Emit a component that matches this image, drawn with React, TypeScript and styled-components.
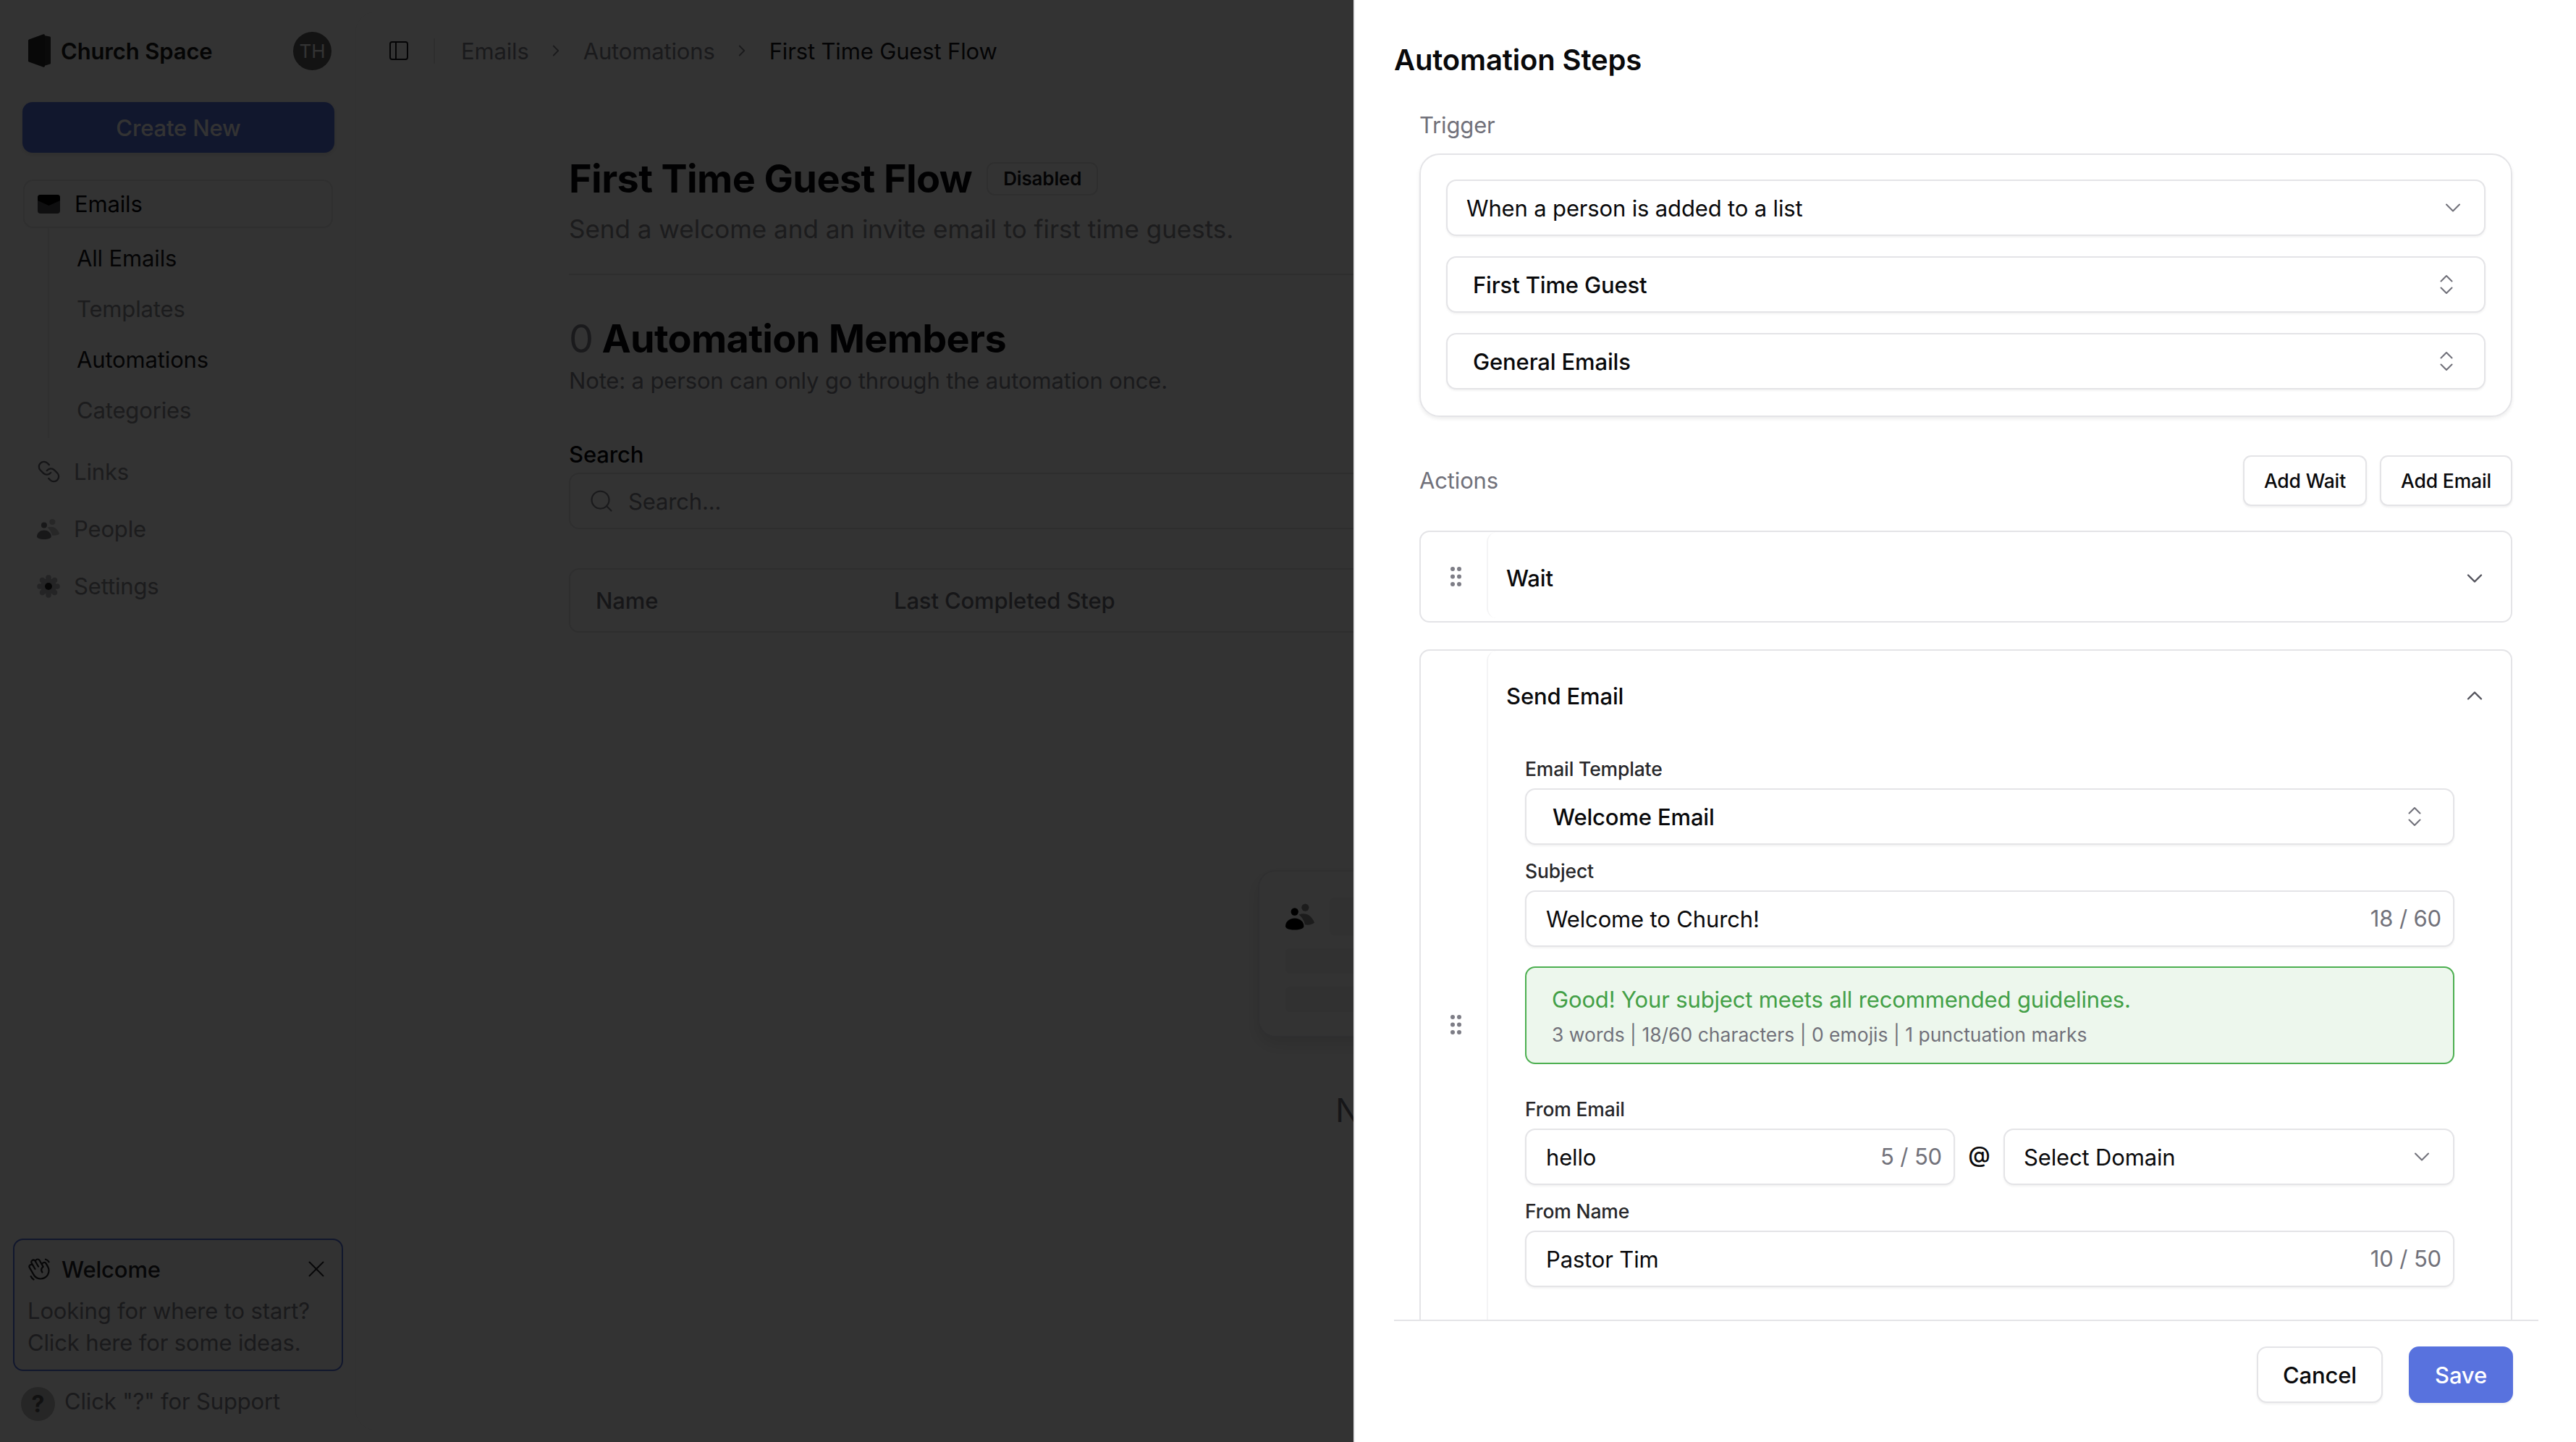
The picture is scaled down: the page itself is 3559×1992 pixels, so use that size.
import React from "react";
import styled, { createGlobalStyle } from "styled-components";
import { ChevronDown, ChevronRight, ChevronUp, ChevronsUpDown, Link as LinkIcon, PanelLeft, Search, X } from "lucide-react";
import { PiHandWaving } from "react-icons/pi";

const Global = createGlobalStyle`
  html, body { margin: 0; padding: 0; background: #fff; }
  * { box-sizing: border-box; }
  body { font-family: Inter, "Liberation Sans", sans-serif; color: #09090b; letter-spacing: -.15px; }
  button { letter-spacing: inherit; }
`;

const Page = styled.div`
  position: relative; display: flex; width: 3559px; height: 1992px; overflow: hidden; background: #fff;
`;
const Sidebar = styled.aside`
  width: 492px; height: 1992px; flex: none; display: flex; flex-direction: column; padding: 0 18px 29px; background: #fefefe;
`;
const BrandRow = styled.div`
  height: 140px; flex: none; display: flex; align-items: center; gap: 13px; padding: 0 16px 0 21px;
`;
const BrandName = styled.span`
  flex: 1; font-size: 31px; font-weight: 600; color: #1a1a1a; white-space: nowrap;
`;
const Avatar = styled.div`
  width: 53px; height: 53px; border-radius: 50%; background: #5e5e5e; color: #fff; display: flex; align-items: center; justify-content: center; font-size: 26px;
`;
const CreateButton = styled.div`
  margin: 1px 12px 0 13px; height: 70px; flex: none; border-radius: 14px; background: #5872de; color: #fff; display: flex; align-items: center; justify-content: center; font-size: 31px; font-weight: 500; box-shadow: 0 2px 6px rgba(0,0,0,.12);
`;
const ActiveItem = styled.div`
  margin: 37px 14px 0 14px; height: 67px; flex: none; display: flex; align-items: center; gap: 20px; padding-left: 18px; border: 2px solid #e8e8ea; border-radius: 14px; background: #fff; font-size: 31px; box-shadow: 0 1px 2px rgba(0,0,0,.04);
`;
const SubNav = styled.div`
  margin-left: 48px; height: 290px; flex: none; padding: 6px 0 0 38px; border-left: 2px solid #efefef;
`;
const SubItem = styled.div<{ $active?: boolean }>`
  height: 70px; display: flex; align-items: center; font-size: 31px; color: ${p => (p.$active ? "#18181b" : "#8a8a92")};
`;
const NavGroup = styled.nav`
  margin-top: 7px; flex: none;
`;
const NavItem = styled.div`
  height: 79px; display: flex; align-items: center; gap: 19px; padding-left: 33px; font-size: 31px; color: #8a8a92;
`;
const IconSlot = styled.span`
  width: 32px; height: 32px; flex: none; display: flex; align-items: center; justify-content: center; color: #6a6a72;
`;
const MirrorIcon = styled.span`
  display: flex; transform: scaleX(-1);
`;
const WelcomeCard = styled.div`
  margin-top: auto; height: 183px; flex: none; padding: 21px 16px 0 18px; border: 2px solid #5872de; border-radius: 14px; background: #fafafa;
`;
const WelcomeHead = styled.div`
  display: flex; align-items: center; gap: 13px; height: 38px; font-size: 31px; font-weight: 500; color: #27272a;
  & > span { flex: 1; }
  & > svg:first-child { margin-left: -2px; }
`;
const WelcomeBody = styled.p`
  margin: 17px 0 0; font-size: 31px; line-height: 43.5px; color: #84848c; white-space: nowrap;
`;
const SupportRow = styled.div`
  margin-top: 21px; display: flex; align-items: center; gap: 13px; padding-left: 11px; height: 48px; font-size: 31px; color: #84848c;
  & > span:last-child { position: relative; top: -4px; }
`;
const HelpDot = styled.span`
  width: 47px; height: 47px; border-radius: 50%; background: #bdbdbd; color: #555; display: flex; align-items: center; justify-content: center; font-size: 32px; font-weight: 700;
`;

const Main = styled.main`
  flex: 1; margin: 17px 18px 17px 0; border-radius: 27px; background: #fff; box-shadow: 0 0 4px rgba(0,0,0,.05); min-width: 0; overflow: hidden;
`;
const TopBar = styled.header`
  height: 106px; display: flex; align-items: center; padding-left: 43px; font-size: 31px; color: #84848c;
`;
const Separator = styled.span`
  width: 2px; height: 35px; margin: 0 36px 0 32px; background: #e4e4e7;
`;
const Crumb = styled.span<{ $current?: boolean }>`
  color: ${p => (p.$current ? "#18181b" : "#84848c")}; white-space: nowrap;
`;
const CrumbGap = styled.span`
  width: 75px; display: flex; justify-content: center; color: #84848c;
`;
const Content = styled.div`
  width: 2200px; padding: 91px 0 0 294px;
`;
const TitleRow = styled.div`
  height: 65px; display: flex; align-items: center; gap: 20px;
`;
const PageTitle = styled.h1`
  margin: 0; font-size: 54px; line-height: 65px; font-weight: 700; white-space: nowrap; letter-spacing: -.6px; color: #09090b;
`;
const Badge = styled.span`
  height: 46px; padding: 0 21px; display: flex; align-items: center; border: 2px solid #e4e4e7; border-radius: 11px; font-size: 26px; font-weight: 600; color: #18181b;
`;
const Subtitle = styled.p`
  margin: 15px 0 0; font-size: 35px; line-height: 44px; color: #8a8a92; white-space: nowrap; letter-spacing: 0;
`;
const Rule = styled.hr`
  margin: 40px 0 0; border: 0; height: 2px; background: #e4e4e7;
`;
const SectionTitle = styled.h2`
  margin: 55px 0 0; font-size: 54px; line-height: 65px; font-weight: 700; letter-spacing: -.7px; white-space: nowrap;
  & > span { font-weight: 400; color: #84848c; }
`;
const Note = styled.p`
  margin: 6px 0 0; font-size: 31px; line-height: 40px; color: #84848c; white-space: nowrap;
`;
const SearchLabel = styled.div`
  margin-top: 62px; font-size: 31px; line-height: 40px; font-weight: 500;
`;
const SearchBox = styled.div`
  margin-top: 5px; height: 78px; display: flex; align-items: center; gap: 19px; padding-left: 25px; border: 2px solid #e4e4e7; border-radius: 14px; font-size: 31px; color: #84848c;
`;
const TableHead = styled.div`
  margin-top: 54px; height: 89px; display: flex; align-items: center; padding-left: 35px; border: 2px solid #e4e4e7; border-radius: 14px; font-size: 31px; font-weight: 500; color: #71717a;
  & > span:first-child { width: 412px; }
`;
const EmptyCard = styled.div`
  position: relative; margin: 328px 0 0 952px; width: 420px; height: 231px; padding: 36px; border: 2px solid #ececef; border-radius: 24px; background: #fff; box-shadow: 0 10px 24px rgba(0,0,0,.12);
`;
const EmptyTop = styled.div`
  display: flex; gap: 20px; align-items: center; height: 52px;
`;
const SkeletonBox = styled.div`
  width: 240px; height: 52px; background: #f4f4f5; border-radius: 6px;
`;
const SkeletonBar = styled.div`
  margin-top: 18px; height: 35px; border-radius: 6px; background: #f4f4f5;
`;
const EmptyText = styled.div`
  margin: 74px 0 0 1059px; font-size: 45px; line-height: 54px; white-space: nowrap; color: #71717a;
`;

const Overlay = styled.div`
  position: absolute; inset: 0; background: rgba(0,0,0,.8);
`;
const Panel = styled.section`
  position: absolute; top: 0; right: 0; bottom: 0; width: 1689px; display: flex; flex-direction: column; background: #fff; border-left: 2px solid #e8e8ea; padding: 58px 52px 0 54px;
`;
const PanelTitle = styled.h2`
  margin: 0; font-size: 40px; line-height: 50px; font-weight: 600; flex: none; color: #09090b;
`;
const Scroll = styled.div`
  flex: 1; min-height: 0; overflow: hidden; padding: 45px 36px 0 35px;
`;
const SectionLabel = styled.div`
  font-size: 31px; line-height: 40px; color: #71717a;
`;
const TriggerCard = styled.div`
  margin-top: 19px; height: 364px; padding: 34px 35px; display: flex; flex-direction: column; gap: 28px; border: 2px solid #e4e4e7; border-radius: 28px; box-shadow: 0 3px 5px rgba(0,0,0,.07);
`;
const Field = styled.div<{ $left?: number; $right?: number; $weight?: number; $flex?: boolean }>`
  height: 78px; flex: ${p => (p.$flex ? "1" : "none")}; min-width: 0; display: flex; align-items: center; justify-content: space-between; padding: 0 ${p => p.$right ?? 25}px 0 ${p => p.$left ?? 26}px; border: 2px solid #e4e4e7; border-radius: 14px; background: #fff; font-size: 31px; font-weight: ${p => p.$weight ?? 400}; color: #09090b; box-shadow: 0 2px 3px rgba(0,0,0,.05); white-space: nowrap;
  & > svg { color: #71717a; flex: none; }
`;
const Count = styled.span`
  color: #71717a; position: relative; top: -1px;
`;
const ActionsRow = styled.div`
  margin-top: 53px; height: 70px; display: flex; align-items: center; justify-content: space-between;
`;
const ActionButtons = styled.div`
  display: flex; gap: 18px;
`;
const SmallButton = styled.button`
  height: 70px; padding: 0 27px; font: 500 26.5px Inter, sans-serif; color: #09090b; background: #fff; border: 2px solid #e4e4e7; border-radius: 11px; box-shadow: 0 2px 3px rgba(0,0,0,.06);
`;
const StepCard = styled.div<{ $open?: boolean }>`
  margin-top: ${p => (p.$open ? 37 : 34)}px; display: flex; border: 2px solid #e4e4e7; border-radius: 14px; background: #fff; height: ${p => (p.$open ? "auto" : "127px")};
`;
const GripColumn = styled.div<{ $open?: boolean }>`
  width: 91px; flex: none; display: flex; align-items: center; justify-content: center; padding: 0 0 ${p => (p.$open ? 4 : 0)}px 6px;
`;
const StepBody = styled.div`
  flex: 1; min-width: 0; margin: 0 7px 4px 0; border-left: 2px solid #f4f4f5; border-radius: 14px;
`;
const StepHead = styled.div<{ $open?: boolean }>`
  height: ${p => (p.$open ? 124 : 121)}px; display: flex; align-items: center; justify-content: space-between; padding: 0 25px 0 25px; font-size: 31px; font-weight: 500; padding-top: ${p => (p.$open ? 0 : 6)}px;
  & > svg { color: #52525b; }
`;
const StepForm = styled.div`
  padding: 22px 71px 30px 51px;
`;
const FieldLabel = styled.div<{ $top?: number }>`
  margin-top: ${p => p.$top ?? 19}px; margin-bottom: 10px; font-size: 26.5px; line-height: 34px; font-weight: 500; color: #27272a;
`;
const SuccessBox = styled.div`
  margin-top: 27px; height: 135px; padding: 24px 0 0 35px; border: 2px solid #4caf50; border-radius: 14px; background: #edf7ed;
`;
const SuccessTitle = styled.div`
  font-size: 31px; line-height: 40px; color: #43a047;
`;
const SuccessMeta = styled.div`
  margin-top: 11px; font-size: 26.5px; line-height: 34px; color: #71717a; white-space: nowrap; letter-spacing: 0;
`;
const DomainRow = styled.div`
  display: flex; align-items: center;
`;
const AtSign = styled.span`
  width: 67px; flex: none; text-align: center; font-size: 31px; font-weight: 500; position: relative; top: -4px;
`;
const Footer = styled.footer`
  height: 169px; flex: none; display: flex; justify-content: flex-end; gap: 36px; padding: 35px 35px 0 0; border-top: 2px solid #e4e4e7; background: #fff;
`;
const FooterButton = styled.button<{ $primary?: boolean }>`
  height: 78px; padding: 0 34px; font: 500 31px Inter, sans-serif; border-radius: 14px; color: ${p => (p.$primary ? "#fff" : "#09090b")}; background: ${p => (p.$primary ? "#5872de" : "#fff")}; border: 2px solid ${p => (p.$primary ? "#5872de" : "#e4e4e7")}; box-shadow: 0 2px 3px rgba(0,0,0,.06);
`;

const Logo = () => (
  <svg width="32" height="46" viewBox="0 0 32 46" style={{ flex: "none" }}>
    <path d="M22 2 L30 3.5 Q31 3.6 31 5 L31 40 Q31 41.5 30 41.6 L22 44 Z" fill="#333" />
    <path d="M1 7.5 L21 0.3 Q23 0 23 2 L23 44 Q23 46 21 45.7 L1 38.5 Q0 38 0 37 L0 9 Q0 8 1 7.5 Z" fill="#2a2a2a" />
  </svg>
);
const MailIcon = () => (
  <svg width="31" height="26" viewBox="0 0 31 26">
    <rect x="0" y="0" width="31" height="26" rx="4" fill="#4a4a50" />
    <path d="M0 4 Q0 0 4 0 L27 0 Q31 0 31 4 L31 8 L15.5 15 L0 8 Z" fill="#000" />
  </svg>
);
const PeopleIcon = ({ color, w, h }: { color: string; w: number; h: number }) => (
  <svg width={w} height={h} viewBox="0 0 42 37">
    <circle cx="28" cy="5.3" r="5.3" fill={color} opacity=".45" />
    <path d="M19 15.5 C27 12 37 15 41 27 C37 30 31 30.5 27.5 29.5 C26.5 24 23 19 19 15.5 Z" fill={color} opacity=".45" />
    <circle cx="13" cy="11.3" r="5.3" fill={color} />
    <path d="M0 32 C0 25 6 20.5 13 20.5 C20 20.5 26 25 26 32 C26 35 20 37 13 37 C6 37 0 35 0 32 Z" fill={color} />
  </svg>
);
const GearIcon = () => (
  <svg width="32" height="32" viewBox="0 0 32 32">
    <g fill="#77777f" opacity=".55">
      <circle cx="16" cy="16" r="11" />
      {[0, 45, 90, 135, 180, 225, 270, 315].map(a => (
        <circle key={a} cx={16 + 12 * Math.cos((a * Math.PI) / 180)} cy={16 + 12 * Math.sin((a * Math.PI) / 180)} r="3.8" />
      ))}
    </g>
    <circle cx="16" cy="16" r="5" fill="#222" />
  </svg>
);
const GripIcon = () => (
  <svg width="15" height="27" viewBox="0 0 15 27">
    {[3, 13.5, 24].map(y => [3, 12].map(x => <circle key={`${x}-${y}`} cx={x} cy={y} r="3" fill="#7d7d86" />))}
  </svg>
);

const UpDown = () => <ChevronsUpDown size={36} strokeWidth={1.4} />;
const Down = () => <ChevronDown size={36} strokeWidth={1.4} />;

export default function App() {
  return (
    <Page>
      <Global />
      <Sidebar>
        <BrandRow>
          <Logo />
          <BrandName>Church Space</BrandName>
          <Avatar>TH</Avatar>
        </BrandRow>
        <CreateButton>Create New</CreateButton>
        <ActiveItem>
          <MailIcon />
          Emails
        </ActiveItem>
        <SubNav>
          <SubItem $active>All Emails</SubItem>
          <SubItem>Templates</SubItem>
          <SubItem $active>Automations</SubItem>
          <SubItem>Categories</SubItem>
        </SubNav>
        <NavGroup>
          <NavItem>
            <IconSlot><MirrorIcon><LinkIcon size={33} strokeWidth={1.7} /></MirrorIcon></IconSlot>
            Links
          </NavItem>
          <NavItem>
            <IconSlot><PeopleIcon color="#77777f" w={34} h={30} /></IconSlot>
            People
          </NavItem>
          <NavItem>
            <IconSlot><GearIcon /></IconSlot>
            Settings
          </NavItem>
        </NavGroup>
        <WelcomeCard>
          <WelcomeHead>
            <PiHandWaving size={36} />
            <span>Welcome</span>
            <X size={38} strokeWidth={1.2} />
          </WelcomeHead>
          <WelcomeBody>
            Looking for where to start?
            <br />
            Click here for some ideas.
          </WelcomeBody>
        </WelcomeCard>
        <SupportRow>
          <HelpDot>?</HelpDot>
          <span>Click "?" for Support</span>
        </SupportRow>
      </Sidebar>

      <Main>
        <TopBar>
          <IconSlot style={{ color: "#18181b" }}><PanelLeft size={36} strokeWidth={1.5} /></IconSlot>
          <Separator />
          <Crumb>Emails</Crumb>
          <CrumbGap><ChevronRight size={26} strokeWidth={1.7} /></CrumbGap>
          <Crumb>Automations</Crumb>
          <CrumbGap><ChevronRight size={26} strokeWidth={1.7} /></CrumbGap>
          <Crumb $current>First Time Guest Flow</Crumb>
        </TopBar>
        <Content>
          <TitleRow>
            <PageTitle>First Time Guest Flow</PageTitle>
            <Badge>Disabled</Badge>
          </TitleRow>
          <Subtitle>Send a welcome and an invite email to first time guests.</Subtitle>
          <Rule />
          <SectionTitle><span>0</span> Automation Members</SectionTitle>
          <Note>Note: a person can only go through the automation once.</Note>
          <SearchLabel>Search</SearchLabel>
          <SearchBox>
            <Search size={36} strokeWidth={1.5} />
            Search...
          </SearchBox>
          <TableHead>
            <span>Name</span>
            <span>Last Completed Step</span>
          </TableHead>
          <EmptyCard>
            <EmptyTop>
              <PeopleIcon color="#000" w={41} h={37} />
              <SkeletonBox />
            </EmptyTop>
            <SkeletonBar />
            <SkeletonBar />
          </EmptyCard>
          <EmptyText>No Members</EmptyText>
        </Content>
      </Main>

      <Overlay />

      <Panel>
        <PanelTitle>Automation Steps</PanelTitle>
        <Scroll>
          <SectionLabel>Trigger</SectionLabel>
          <TriggerCard>
            <Field>When a person is added to a list<Down /></Field>
            <Field $left={35} $right={34} $weight={500}>First Time Guest<UpDown /></Field>
            <Field $left={35} $right={34} $weight={500}>General Emails<UpDown /></Field>
          </TriggerCard>
          <ActionsRow>
            <SectionLabel>Actions</SectionLabel>
            <ActionButtons>
              <SmallButton>Add Wait</SmallButton>
              <SmallButton>Add Email</SmallButton>
            </ActionButtons>
          </ActionsRow>
          <StepCard>
            <GripColumn><GripIcon /></GripColumn>
            <StepBody>
              <StepHead>Wait<ChevronDown size={36} strokeWidth={1.6} /></StepHead>
            </StepBody>
          </StepCard>
          <StepCard $open>
            <GripColumn $open><GripIcon /></GripColumn>
            <StepBody>
              <StepHead $open>Send Email<ChevronUp size={36} strokeWidth={1.6} /></StepHead>
              <StepForm>
                <FieldLabel $top={0}>Email Template</FieldLabel>
                <Field $left={36} $right={35} $weight={500}>Welcome Email<UpDown /></Field>
                <FieldLabel>Subject</FieldLabel>
                <Field $left={27} $right={16}>Welcome to Church!<Count>18 / 60</Count></Field>
                <SuccessBox>
                  <SuccessTitle>Good! Your subject meets all recommended guidelines.</SuccessTitle>
                  <SuccessMeta>3 words | 18/60 characters | 0 emojis | 1 punctuation marks</SuccessMeta>
                </SuccessBox>
                <FieldLabel $top={45}>From Email</FieldLabel>
                <DomainRow>
                  <Field $left={27} $right={16} $flex>hello<Count>5 / 50</Count></Field>
                  <AtSign>@</AtSign>
                  <Field $flex style={{ flexBasis: 623, flexGrow: 0 }}>Select Domain<Down /></Field>
                </DomainRow>
                <FieldLabel>From Name</FieldLabel>
                <Field $left={27} $right={16}>Pastor Tim<Count>10 / 50</Count></Field>
                <FieldLabel $top={45} />
                <Field />
              </StepForm>
            </StepBody>
          </StepCard>
        </Scroll>
        <Footer>
          <FooterButton>Cancel</FooterButton>
          <FooterButton $primary>Save</FooterButton>
        </Footer>
      </Panel>
    </Page>
  );
}
